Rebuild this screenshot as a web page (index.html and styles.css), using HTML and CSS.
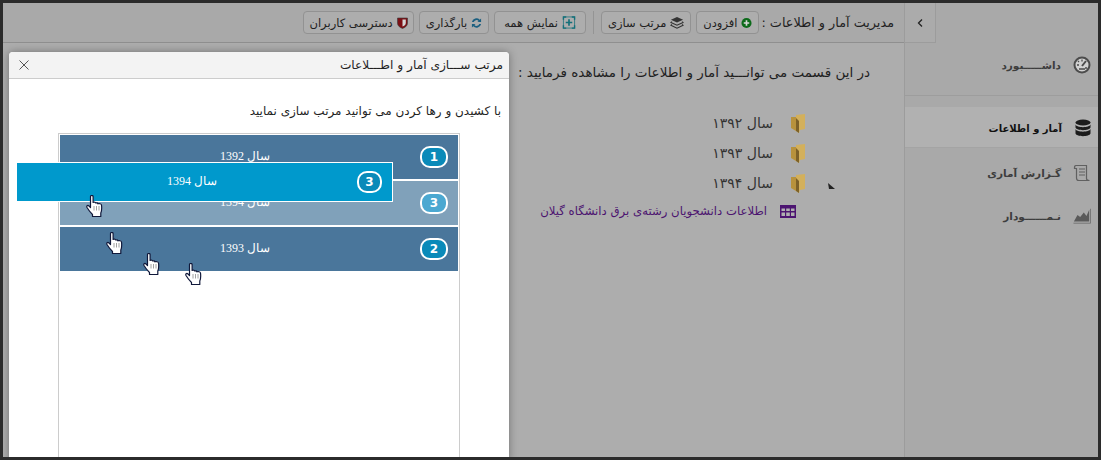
FILE: index.html
```html
<!DOCTYPE html>
<html lang="fa" dir="rtl">
  <head>
    <meta charset="UTF-8" />
    <title>مدیریت آمار و اطلاعات</title>
    <link rel="stylesheet" href="styles.css">
  </head>
  <body>
    <svg class="defs" width="0" height="0">
      <symbol id="hand" viewBox="0 0 17 22">
        <path d="M4.500 1.500c0-1.400 2.600-1.400 2.600 0v6l.4-.3c1-.4 2 .1 2.200.8.900-.5 2-.1 2.200.8 1.400-.5 3.400-.1 3.600 1.200.4 3.400.3 5.800-.7 8v3.500H6.500v-2C4.500 17.500 2.500 15 1 12.500.3 11 1.600 9.800 3 11l1.500 1.500z" fill="#fff" stroke="#10183a" stroke-width="1.200" stroke-linejoin="round"/>
        <path d="M8 11v4.500M10.500 11v4.500M13 11v4.500" stroke="#8a8a8a" stroke-width=".8"/>
      </symbol>
      <symbol id="folder" viewBox="0 0 14 19">
        <path d="M5 1 14 0v15l-5 1-1 3-3-2z" fill="#d3b05c"/>
        <path d="M0 3h5v14l-5-3z" fill="#b8923c"/>
        <path d="M5 4l3 3v12l-3-2z" fill="#7d6128"/>
      </symbol>
    </svg>

    <div class="frame">
      <aside class="sidebar">
        <button class="toggle">
          <svg width="6" height="8" viewBox="0 0 6 8"><path d="M5 .5 1.500 4 5 7.500" fill="none" stroke="#222" stroke-width="1.300"/></svg>
        </button>
        <a class="side-item first">
          <svg class="side-icon" viewBox="0 0 18 18"><circle cx="9" cy="9" r="7.500" fill="#d2d2d2" stroke="#4c4c4c" stroke-width="2"/><path d="M9 10 13 5" stroke="#4c4c4c" stroke-width="2"/><path d="M4 9h2M12 12h2M5 5l1 1M9 3.500v2M6 13h6" stroke="#4c4c4c" stroke-width="1.300"/></svg>
          <span>داشـــــبورد</span>
        </a>
        <a class="side-item active">
          <svg class="side-icon" viewBox="0 0 18 18"><g fill="#1c1c1c"><ellipse cx="9" cy="3.500" rx="7.500" ry="3"/><path d="M1.500 5.500c1 3.500 14 3.500 15 0v3c-1 3.500-14 3.500-15 0zM1.500 10c1 3.500 14 3.500 15 0v4.500c-1 3.500-14 3.500-15 0z"/></g></svg>
          <span>آمار و اطلاعات</span>
        </a>
        <a class="side-item">
          <svg class="side-icon" viewBox="0 0 18 18"><path d="M3 1.500h10.500v13c0 2 1 2 3 2H6c-2 0-2.500-1-2.500-2.500V4.500H1.500c0-2 0-3 1.500-3z" fill="none" stroke="#606060" stroke-width="1.200"/><path d="M6 5h6M6 8h6M6 11h6" stroke="#606060" stroke-width="1.200"/></svg>
          <span>گـزارش آماری</span>
        </a>
        <a class="side-item">
          <svg class="side-icon" viewBox="0 0 20 18"><path d="M1 15 5 8l3 2 4-5 3 4 3-7v13z" fill="#5a5a5a"/><path d="M.500 17h19V1" fill="none" stroke="#6f6f6f"/></svg>
          <span>نـمــــــودار</span>
        </a>
      </aside>

      <main class="main">
        <div class="toolbar">
          <span class="toolbar-title">مدیریت آمار و اطلاعات :</span>
          <button class="tool">
            <svg class="tool-icon" viewBox="0 0 12 12"><circle cx="6" cy="6" r="5.500" fill="#0c6a1a"/><path d="M6 3v6M3 6h6" stroke="#d8d8d8" stroke-width="1.800"/></svg>
            افزودن
          </button>
          <button class="tool">
            <svg class="tool-icon wide" viewBox="0 0 15 13"><path d="M7.500 .5 14 3.500 7.500 6.500 1 3.500z" fill="#333"/><path d="M2 5.500 1 6.500 7.500 9.500 14 6.500 13 5.500M2 8.500 1 9.500 7.500 12.500 14 9.500 13 8.500" fill="none" stroke="#333" stroke-width="1.100"/></svg>
            مرتب سازی
          </button>
          <span class="tool-sep"></span>
          <button class="tool tool-roomy">
            <svg class="tool-icon wide" viewBox="0 0 14 14"><path d="M1 4V1h3M10 1h3v3M13 10v3h-3M4 13H1v-3" fill="none" stroke="#14707a" stroke-width="1.500"/><path d="M1 1h12v12H1z" fill="none" stroke="#14707a" stroke-width=".8"/><path d="M7 3.500v7M3.500 7h7" stroke="#14707a" stroke-width="1.800"/></svg>
            نمایش همه
          </button>
          <button class="tool">
            <svg class="tool-icon" viewBox="0 0 12 12"><path d="M1 5a5 5 0 0 1 8.500-2.500L11 1v4H7l1.300-1.300A3.200 3.200 0 0 0 3 5zM11 7a5 5 0 0 1-8.500 2.500L1 11V7h4L3.700 8.300A3.200 3.200 0 0 0 9 7z" fill="#1b5f80"/></svg>
            بارگذاری
          </button>
          <button class="tool tool-tight">
            <svg class="tool-icon" viewBox="0 0 11 12"><path d="M.5 1h10v5c0 3-2.500 4.500-5 5.500C3 10.500.5 9 .5 6z" fill="#7c0f14" stroke="#3a3a3a" stroke-width=".6"/><path d="M5.500 2.500h3.300v3.500c0 1.800-1.500 2.800-3.300 3.600z" fill="#d6d6d6"/></svg>
            دسترسی کاربران
          </button>
        </div>

        <div class="content">
          <p class="lead">در این قسمت می توانـــید آمار و اطلاعات را مشاهده فرمایید :</p>
          <ul class="tree">
            <li><svg class="folder"><use href="#folder"/></svg>سال ۱۳۹۲</li>
            <li><svg class="folder"><use href="#folder"/></svg>سال ۱۳۹۳</li>
            <li><svg class="folder"><use href="#folder"/></svg>سال ۱۳۹۴</li>
            <li class="tree-table">
              <svg class="table-icon" viewBox="0 0 16 13"><path d="M0 0h16v13H0z" fill="#4c1470"/><path d="M1.500 3.500h3.500v2.500H1.500zM6.200 3.500h3.600v2.500H6.200zM11 3.500h3.500v2.500H11zM1.500 7.500h3.500V11H1.500zM6.200 7.500h3.600V11H6.200zM11 7.500h3.500V11H11z" fill="#b0b0b0"/></svg>
              اطلاعات دانشجویان رشته‌ی برق دانشگاه گیلان
            </li>
          </ul>
        </div>
      </main>

      <svg class="pointer" width="7" height="7" viewBox="0 0 7 7"><path d="M0 0 7 6H1z" fill="#222"/></svg>

      <section class="modal">
        <header class="modal-head">
          <span>مرتب ســـازی آمار و اطـــلاعات</span>
          <svg class="close" width="10" height="10" viewBox="0 0 10 10"><path d="M.5.5l9 9M9.500.5l-9 9" stroke="#555"/></svg>
        </header>
        <div class="modal-body">
          <p class="hint">با کشیدن و رها کردن می توانید مرتب سازی نمایید</p>
          <ol class="sort-list">
            <li class="sort-item"><b class="num">1</b><span class="sort-label">سال 1392</span></li>
            <li class="sort-item ghost"><b class="num">3</b><span class="sort-label">سال 1394</span></li>
            <li class="sort-item"><b class="num">2</b><span class="sort-label">سال 1393</span></li>
          </ol>
        </div>
      </section>

      <div class="sort-item dragging"><b class="num">3</b><span class="sort-label">سال 1394</span></div>

      <svg class="hand h1"><use href="#hand"/></svg>
      <svg class="hand h2"><use href="#hand"/></svg>
      <svg class="hand h3"><use href="#hand"/></svg>
      <svg class="hand h4"><use href="#hand"/></svg>
    </div>
  </body>
</html>
```

FILE: styles.css
```css
* {
  box-sizing: border-box;
}

html,
body {
  height: 100%;
  margin: 0;
}

body {
  font-family: "DejaVu Sans", sans-serif;
  font-size: 13px;
  color: #1f1f1f;
  overflow: hidden;
}

.defs {
  position: absolute;
}

.frame {
  position: relative;
  display: flex;
  width: 1101px;
  height: 460px;
  border: 3px solid #2b2b2b;
  background: #adadad;
  overflow: hidden;
}

/* sidebar */
.sidebar {
  width: 194px;
  flex: none;
  background: #a9a9a9;
  border-left: 1px solid #9c9c9c;
}

.toggle {
  display: block;
  width: 31px;
  height: 40px;
  margin-right: auto;
  padding: 0;
  background: #ababab;
  border: 0;
  border-right: 1px solid #9c9c9c;
  border-bottom: 1px solid #9c9c9c;
}

.side-item {
  display: flex;
  align-items: center;
  gap: 12px;
  height: 43px;
  padding-right: 7px;
  font-size: 10.500px;
  font-weight: 600;
  color: #3d3d3d;
}

.side-item.first {
  height: 53px;
  margin-bottom: 11px;
  padding-bottom: 8px;
  border-bottom: 1px solid #9d9d9d;
}

.side-item.active {
  height: 41px;
  margin-bottom: 3px;
  padding-top: 2px;
  padding-right: 6px;
  background: #b1b1b1;
  border-bottom: 1px solid #a4a4a4;
  color: #111;
  font-size: 10px;
  font-weight: 700;
}

.side-icon {
  width: 18px;
  height: 18px;
  flex: none;
}

/* toolbar */
.main {
  flex: 1;
  min-width: 0;
}

.toolbar {
  display: flex;
  align-items: center;
  gap: 5px;
  height: 40px;
  padding-right: 10px;
  background: #a9a9a9;
  border-bottom: 1px solid #8f8f8f;
}

.toolbar-title {
  font-size: 12.800px;
  margin-left: -3px;
}

.tool {
  display: flex;
  align-items: center;
  gap: 4px;
  height: 23px;
  padding: 0 6px;
  font-family: inherit;
  font-size: 11.500px;
  color: #222;
  background: #adadad;
  border: 1px solid #929292;
  border-radius: 4px;
}

.tool-roomy {
  padding: 0 9px;
}

.tool-tight {
  padding: 0 5px;
}

.tool-icon {
  width: 11px;
  height: 12px;
  flex: none;
}

.tool-icon.wide {
  width: 14px;
  height: 13px;
}

.tool-sep {
  width: 1px;
  height: 23px;
  margin: 0 2px;
  background: #949494;
}

/* page content */
.content {
  padding: 19px 34px 0 0;
}

.lead {
  margin: 0 0 25px;
  font-size: 13.500px;
  line-height: 21px;
}

.tree {
  list-style: none;
  margin: 0;
  padding: 0 65px 0 0;
}

.tree li {
  display: flex;
  align-items: center;
  gap: 18px;
  height: 30px;
  font-size: 14px;
  color: #333;
}

.tree .tree-table {
  gap: 13px;
  margin-top: -2px;
  margin-right: 9px;
  color: #4c1470;
  font-size: 11.700px;
}

.folder {
  width: 14px;
  height: 19px;
  flex: none;
}

.table-icon {
  width: 16px;
  height: 13px;
  flex: none;
}

.pointer {
  position: absolute;
  left: 825px;
  top: 180px;
}

/* modal */
.modal {
  position: absolute;
  left: 6px;
  top: 49px;
  width: 500px;
  height: 410px;
  background: #fff;
  border-radius: 4px 4px 0 0;
  box-shadow: 0 0 8px rgba(0, 0, 0, 0.35);
}

.modal-head {
  display: flex;
  align-items: center;
  justify-content: space-between;
  height: 27px;
  padding: 0 6px 0 10px;
  background: #f3f3f3;
  border-bottom: 1px solid #ccc;
  border-radius: 4px 4px 0 0;
  font-size: 12.200px;
}

.modal-body {
  padding: 21px 8px 0 0;
}

.hint {
  margin: 0 0 11px;
  font-size: 12px;
  line-height: 22px;
}

.sort-list {
  list-style: none;
  width: 402px;
  height: 340px;
  margin: 0 41px 0 0;
  padding: 1px;
  border: 1px solid #ccc;
}

.sort-item {
  display: flex;
  align-items: center;
  height: 44px;
  margin-bottom: 2px;
  padding-right: 10px;
  background: #4a769b;
  color: #fff;
  font-family: "Liberation Serif", serif;
  font-size: 12px;
}

.sort-item.ghost {
  background: #80a1ba;
}

.sort-label {
  flex: 1;
  margin-top: -2px;
  padding-left: 10px;
  text-align: center;
}

.num {
  display: flex;
  align-items: center;
  justify-content: center;
  width: 28px;
  height: 22px;
  flex: none;
  background: #0a8ab9;
  border: 2px solid #fff;
  border-radius: 10px;
  font-family: "DejaVu Sans", sans-serif;
  font-size: 12px;
}

.ghost .num {
  background: #4ba8d1;
}

.dragging {
  position: absolute;
  left: 14px;
  top: 159px;
  width: 376px;
  height: 40px;
  margin: 0;
  background: #0099cc;
  border: 1px solid #fff;
  border-left: 0;
}

.dragging .num {
  width: 25px;
}

/* cursors from the capture */
.hand {
  position: absolute;
  width: 17px;
  height: 22px;
}

.h1 { left: 83px; top: 192px; }
.h2 { left: 103px; top: 229px; }
.h3 { left: 140px; top: 250px; }
.h4 { left: 182px; top: 260px; }
```
